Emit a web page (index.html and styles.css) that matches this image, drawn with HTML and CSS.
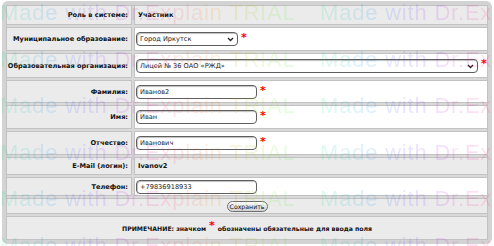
FILE: index.html
```html
<!DOCTYPE html>
<html lang="ru">
<head>
    <meta charset="UTF-8">
    <title>Профиль пользователя</title>
    <link rel="stylesheet" href="styles.css">
</head>
<body>
    <div class="frame">
        <div class="form">
            <div class="cell label">Роль в системе:</div>
            <div class="cell value grey"><b>Участник</b></div>

            <div class="cell label">Муниципальное образование:</div>
            <div class="cell value">
                <span class="sel sel-short">Город Иркутск
                    <svg class="arrow" width="7" height="5" viewBox="0 0 7 5"><path d="M1 1 L3.5 3.5 L6 1" fill="none" stroke="#222" stroke-width="1.3"/></svg>
                </span><span class="req">*</span>
            </div>

            <div class="cell label">Образовательная организация:</div>
            <div class="cell value">
                <span class="sel sel-long">Лицей № 36 ОАО «РЖД»
                    <svg class="arrow" width="7" height="5" viewBox="0 0 7 5"><path d="M1 1 L3.5 3.5 L6 1" fill="none" stroke="#222" stroke-width="1.3"/></svg>
                </span><span class="req">*</span>
            </div>

            <div class="cell label">Фамилия:</div>
            <div class="cell value"><input class="field" type="text" value="Иванов2"><span class="req">*</span></div>

            <div class="cell label">Имя:</div>
            <div class="cell value"><input class="field" type="text" value="Иван"><span class="req">*</span></div>

            <div class="cell label">Отчество:</div>
            <div class="cell value"><input class="field" type="text" value="Иванович"><span class="req">*</span></div>

            <div class="cell label">E-Mail (логин):</div>
            <div class="cell value grey"><b>Ivanov2</b></div>

            <div class="cell label">Телефон:</div>
            <div class="cell value"><input class="field" type="text" value="+79836918933"></div>

            <div class="cell wide grey"><button class="save">Сохранить</button></div>

            <div class="cell wide grey note">ПРИМЕЧАНИЕ: значком <span class="req">*</span> обозначены обязательные для ввода поля</div>
        </div>
    </div>

    <div class="watermark">
        <div class="wm-line"><span>Made with Dr.Explain TRIAL</span><span>Made with Dr.Ex</span></div>
        <div class="wm-line"><span>Made with Dr.Explain TRIAL</span><span>Made with Dr.Ex</span></div>
        <div class="wm-line"><span>Made with Dr.Explain TRIAL</span><span>Made with Dr.Ex</span></div>
        <div class="wm-line"><span>Made with Dr.Explain TRIAL</span><span>Made with Dr.Ex</span></div>
        <div class="wm-line"><span>Made with Dr.Explain TRIAL</span><span>Made with Dr.Ex</span></div>
        <div class="wm-line"><span>Made with Dr.Explain TRIAL</span><span>Made with Dr.Ex</span></div>
    </div>
</body>
</html>
```

FILE: styles.css
```css
body {
    margin: 0;
    background: #fff;
    font-family: "DejaVu Sans", Verdana, sans-serif;
    font-size: 6.6px;
    color: #111;
    position: relative;
    width: 494px;
    height: 246px;
    overflow: hidden;
}

.frame {
    margin: 1px 2px 0 2px;
    border: 4px solid #d3d3d3;
    border-radius: 6px;
    background: #d9d9d9;
    box-shadow: inset 0 0 0 1px #c4c4c4;
}

.form {
    display: grid;
    grid-template-columns: 126px 1fr;
    grid-template-rows: 20px 24px 25px 23px 24px 24px 18px 19px 16px 24px;
    gap: 2px;
}

.cell {
    box-sizing: border-box;
    border: 1px solid #c2c2c2;
    background: #ebebeb;
    display: flex;
    align-items: center;
}

.label {
    justify-content: flex-end;
    padding-right: 3px;
    font-weight: bold;
    white-space: nowrap;
}

.value {
    background: #fff;
    padding-left: 1px;
}

.value b {
    padding-left: 2px;
}

.grey {
    background: #ebebeb;
}

.wide {
    grid-column: 1 / -1;
    justify-content: center;
}

.field,
.sel {
    box-sizing: border-box;
    height: 14px;
    border: 1px solid #5e5e5e;
    border-radius: 4px;
    box-shadow: inset 1px 1px 1px rgba(0, 0, 0, 0.25);
    background: #fff;
    font-family: "DejaVu Sans", Verdana, sans-serif;
    font-size: 6.6px;
    color: #222;
    padding: 0 3px;
}

.field {
    width: 121px;
    outline: none;
}

.sel {
    position: relative;
    display: inline-flex;
    align-items: center;
}

.sel-short {
    width: 102px;
}

.sel-long {
    width: 342px;
}

.arrow {
    position: absolute;
    right: 3px;
    top: 4px;
}

.req {
    color: #f00;
    font-size: 11px;
    font-weight: bold;
    margin-left: 3px;
    align-self: flex-start;
    margin-top: 5px;
    line-height: 9px;
}

.save {
    height: 11px;
    width: 41px;
    padding: 0;
    border: 1px solid #6e6e6e;
    border-radius: 6px;
    background: linear-gradient(#fdfdfd, #d0d0d0);
    font-family: "DejaVu Sans", Verdana, sans-serif;
    font-size: 6.2px;
    color: #111;
    line-height: 9px;
}

.note {
    font-weight: bold;
    font-size: 6.2px;
}

.note .req {
    align-self: center;
    margin: -5px 3px 0 3px;
}

.watermark {
    position: absolute;
    left: 0;
    top: 0;
    width: 494px;
    height: 246px;
    overflow: hidden;
    padding-top: 2px;
    box-sizing: border-box;
    pointer-events: none;
    font-family: "Liberation Sans", Arial, sans-serif;
    font-size: 22px;
    letter-spacing: 0.8px;
    line-height: 22px;
    opacity: 0.13;
}

.wm-line {
    white-space: nowrap;
    height: 46.5px;
}

.wm-line span {
    display: inline-block;
    width: 320px;
    color: transparent;
    background: linear-gradient(90deg,
        hsl(150, 100%, 45%) 0px,
        hsl(210, 100%, 50%) 53px,
        hsl(270, 100%, 55%) 107px,
        hsl(330, 100%, 55%) 160px,
        hsl(30, 100%, 50%) 213px,
        hsl(90, 100%, 45%) 267px,
        hsl(150, 100%, 45%) 320px);
    -webkit-background-clip: text;
    background-clip: text;
}

.wm-line span + span {
    width: 174px;
}
```
